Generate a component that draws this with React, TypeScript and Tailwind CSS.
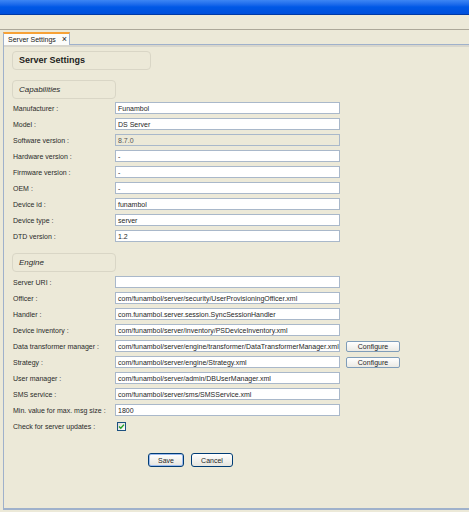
const capabilities = [
  { label: 'Manufacturer :', value: 'Funambol' },
  { label: 'Model :', value: 'DS Server' },
  { label: 'Software version :', value: '8.7.0', disabled: true },
  { label: 'Hardware version :', value: '-' },
  { label: 'Firmware version :', value: '-' },
  { label: 'OEM :', value: '-' },
  { label: 'Device id :', value: 'funambol' },
  { label: 'Device type :', value: 'server' },
  { label: 'DTD version :', value: '1.2' },
];

const engine = [
  { label: 'Server URI :', value: '' },
  { label: 'Officer :', value: 'com/funambol/server/security/UserProvisioningOfficer.xml' },
  { label: 'Handler :', value: 'com.funambol.server.session.SyncSessionHandler' },
  { label: 'Device inventory :', value: 'com/funambol/server/inventory/PSDeviceInventory.xml' },
  {
    label: 'Data transformer manager :',
    value: 'com/funambol/server/engine/transformer/DataTransformerManager.xml',
    configure: true,
  },
  { label: 'Strategy :', value: 'com/funambol/server/engine/Strategy.xml', configure: true },
  { label: 'User manager :', value: 'com/funambol/server/admin/DBUserManager.xml' },
  { label: 'SMS service :', value: 'com/funambol/server/sms/SMSService.xml' },
  { label: 'Min. value for max. msg size :', value: '1800' },
];

type Row = { label: string; value: string; disabled?: boolean; configure?: boolean };

function Field({ row }: { row: Row }) {
  return (
    <div className="flex h-[12px] items-center">
      <div className="w-[103px] pl-[1px] text-[7px] leading-none text-[#2a2a2a]">{row.label}</div>
      <div
        className={[
          'flex h-[12px] w-[225px] items-center border border-[#a9b8ca] px-[2px] text-[7px] leading-none whitespace-nowrap overflow-hidden',
          row.disabled ? 'bg-[#ece9d8] text-[#555555]' : 'bg-white text-[#262626]',
        ].join(' ')}
      >
        {row.value}
      </div>
      {row.configure && (
        <button className="ml-[6px] flex h-[11px] w-[54px] items-center justify-center rounded-[2px] border border-[#7f9db9] bg-gradient-to-b from-white to-[#ebeae4] text-[7px] leading-none text-[#1e1e1e]">
          Configure
        </button>
      )}
    </div>
  );
}

function SectionBox({ title, className }: { title: string; className: string }) {
  return (
    <div
      className={[
        'flex items-center rounded-[4px] border border-[#d9d6c6] pl-[6px]',
        className,
      ].join(' ')}
    >
      {title}
    </div>
  );
}

export default function App() {
  return (
    <div className="h-[512px] w-[469px] overflow-hidden bg-[#ece9d8] font-['Liberation_Sans',Arial,sans-serif]">
      {/* window title bar */}
      <div className="h-[15px] border-b border-[#0039a6] bg-gradient-to-b from-[#3d86f4] via-[#0058e6] to-[#0050dc]" />

      {/* toolbar strip */}
      <div className="h-[15px] border-b border-[#aca899]" />

      {/* tab strip */}
      <div className="flex h-[15px] items-end">
        <div className="ml-[3px] flex h-[13px] w-[67px] items-center gap-[6px] border-x border-t-2 border-[#9fb1cb] border-t-[#f7a236] bg-[#fcfcfa] pl-[4px] text-[7px] leading-none text-[#222222]">
          <span>Server Settings</span>
          <span className="text-[9px]">×</span>
        </div>
        <div className="h-px flex-1 bg-[#9fb1cb]" />
      </div>

      {/* panel */}
      <div className="ml-[3px] h-[465px] border-b-2 border-l border-[#9fb1cb]">
        <div className="h-[2px] bg-[#d8d6cc]" />
        <div className="pl-[8px] pt-[4px]">
          <SectionBox
            title="Server Settings"
            className="h-[19px] w-[139px] text-[9px] font-bold text-[#1e1e1e]"
          />

          <SectionBox
            title="Capabilities"
            className="mt-[10px] h-[19px] w-[104px] text-[8px] italic text-[#2a2a2a]"
          />
          <div className="mt-[3px] flex flex-col gap-[4px]">
            {capabilities.map((row) => (
              <Field key={row.label} row={row} />
            ))}
          </div>

          <SectionBox
            title="Engine"
            className="mt-[11px] h-[19px] w-[104px] text-[8px] italic text-[#2a2a2a]"
          />
          <div className="mt-[4px] flex flex-col gap-[4px]">
            {engine.map((row) => (
              <Field key={row.label} row={row} />
            ))}
            <div className="flex h-[12px] items-center">
              <div className="w-[105px] pl-[1px] text-[7px] leading-none text-[#2a2a2a]">
                Check for server updates :
              </div>
              <div className="flex h-[9px] w-[9px] items-center justify-center border border-[#1c5180] bg-gradient-to-br from-[#dcdcd7] to-white">
                <svg width="7" height="7" viewBox="0 0 7 7">
                  <path d="M1 3.5 L2.8 5.2 L6 1.6" fill="none" stroke="#21a121" strokeWidth="1.4" />
                </svg>
              </div>
            </div>
          </div>

          <div className="mt-[21px] flex gap-[7px] pl-[136px]">
            <button className="flex h-[14px] w-[36px] items-center justify-center rounded-[3px] border border-[#003c74] bg-gradient-to-b from-white to-[#e6e5de] text-[7px] leading-none text-[#1e1e1e] shadow-[inset_0_0_0_1px_#9cbbef]">
              Save
            </button>
            <button className="flex h-[14px] w-[42px] items-center justify-center rounded-[3px] border border-[#003c74] bg-gradient-to-b from-white to-[#e6e5de] text-[7px] leading-none text-[#1e1e1e]">
              Cancel
            </button>
          </div>
        </div>
      </div>
    </div>
  );
}
